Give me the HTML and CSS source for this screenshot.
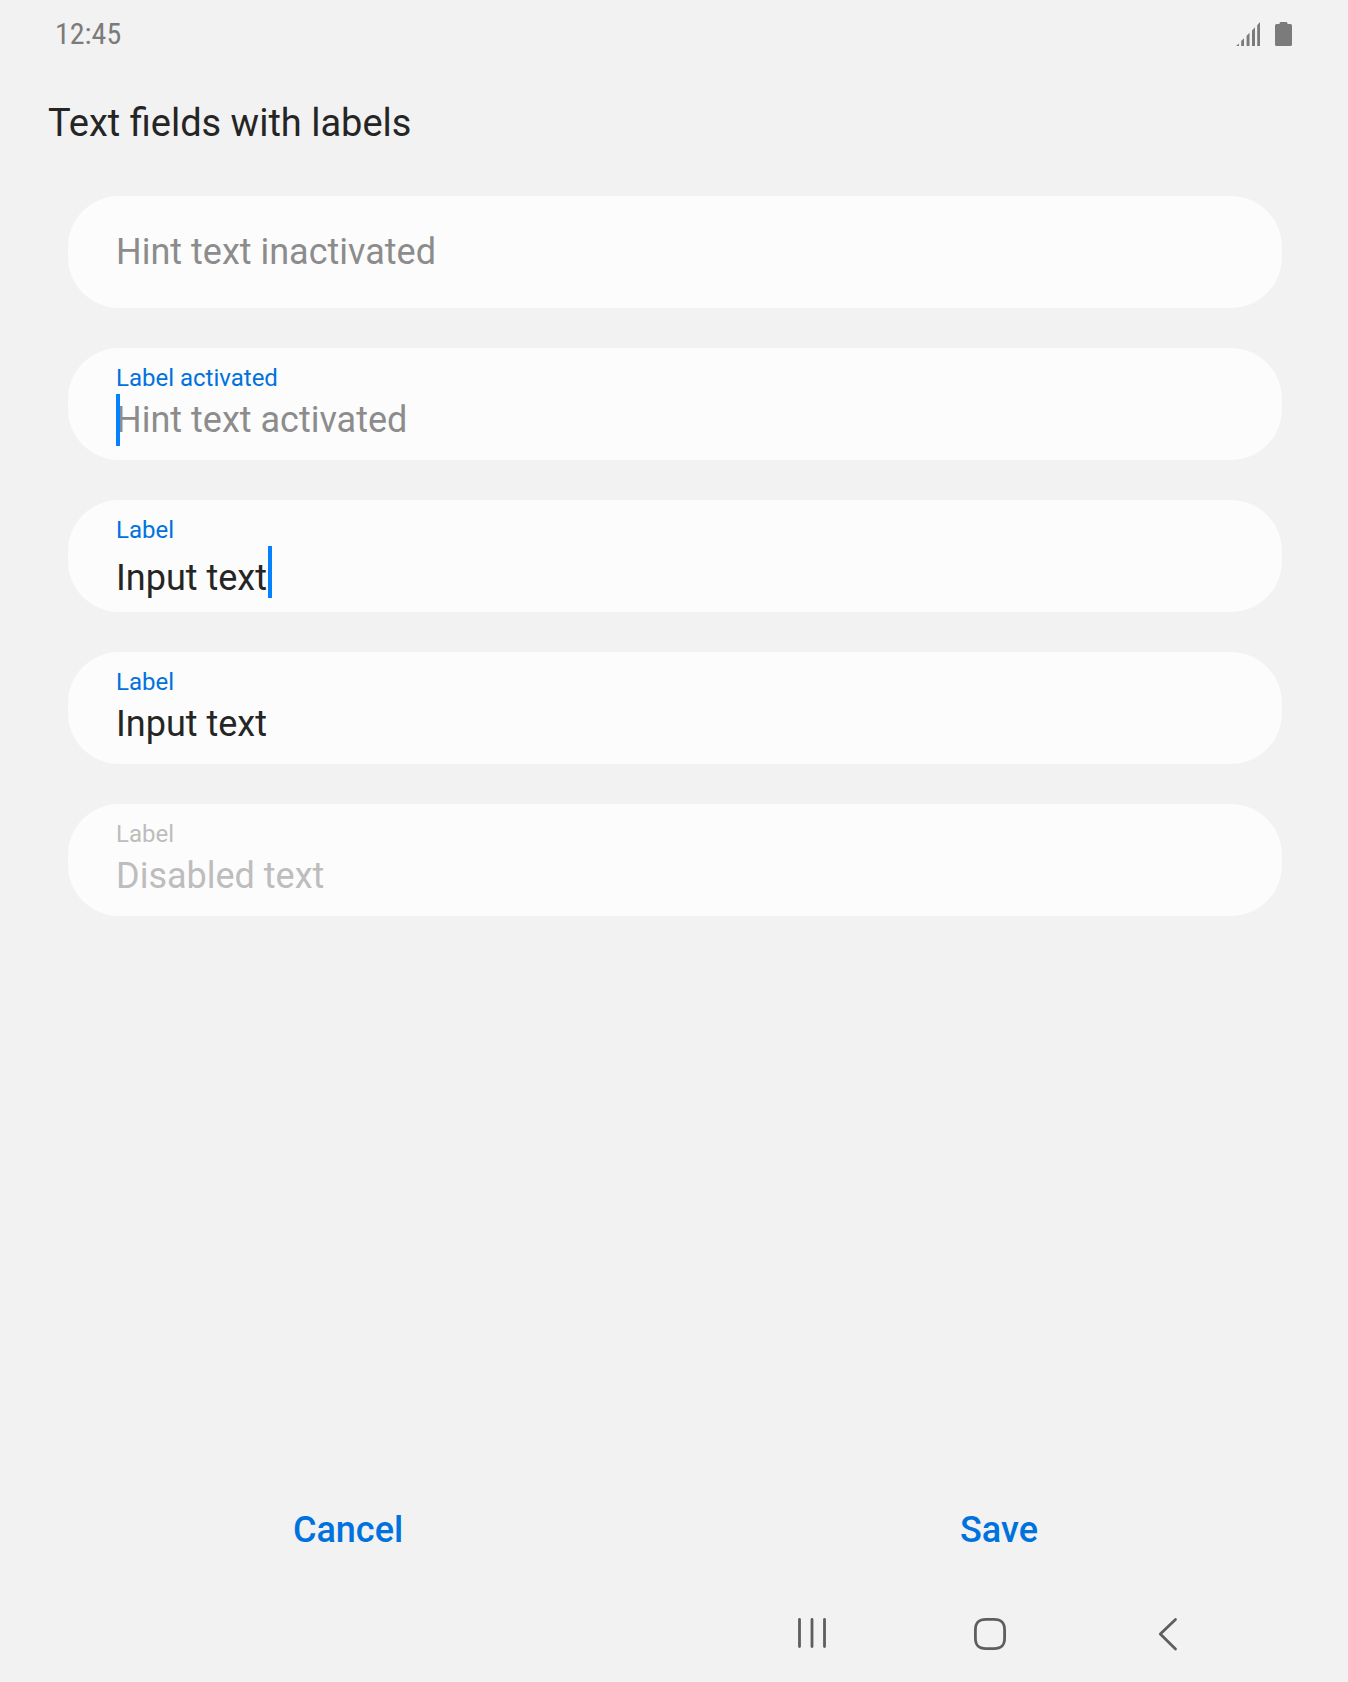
FILE: index.html
```html
<!DOCTYPE html>
<html lang="en">
<head>
<meta charset="utf-8">
<title>Text fields with labels</title>
<link rel="stylesheet" href="styles.css">
</head>
<body>
<div class="screen">
  <header class="status-bar">
    <span class="clock">12:45</span>
    <div class="status-icons">
      <svg class="signal" width="25" height="26" viewBox="0 0 25 26">
        <path d="M0 25L3 22.500V25ZM5.200 25V20L8 17.200V25ZM10.600 25V14.800L13.500 11.700V25ZM16 25V9.400L19 6.200V25ZM21.200 25V4.200L24 1V25Z"/>
      </svg>
      <svg class="battery" width="17" height="26" viewBox="0 0 17 26">
        <path d="M4.500 3V2.400Q4.500 1 5.900 1H11.100Q12.500 1 12.500 2.400V3H15.500Q17 3 17 4.500V23.500Q17 25 15.500 25H1.500Q0 25 0 23.500V4.500Q0 3 1.500 3Z"/>
      </svg>
    </div>
  </header>

  <h1 class="title">Text fields with labels</h1>

  <main class="fields">
    <div class="field field-empty">
      <div class="value hint">Hint text inactivated</div>
    </div>
    <div class="field">
      <div class="label">Label activated</div>
      <div class="value hint"><span class="caret caret-start"></span>Hint text activated</div>
    </div>
    <div class="field">
      <div class="label">Label</div>
      <div class="value value-low">Input text<span class="caret caret-end"></span></div>
    </div>
    <div class="field">
      <div class="label">Label</div>
      <div class="value">Input text</div>
    </div>
    <div class="field field-disabled">
      <div class="label">Label</div>
      <div class="value">Disabled text</div>
    </div>
  </main>

  <div class="actions">
    <button class="action" type="button">Cancel</button>
    <button class="action" type="button">Save</button>
  </div>

  <nav class="nav-bar">
    <svg class="nav-icon" width="36" height="36" viewBox="0 0 36 36">
      <path d="M5.500 3.500V30.500M18 3.500V30.500M30.500 3.500V30.500"/>
    </svg>
    <svg class="nav-icon" width="36" height="36" viewBox="0 0 36 36">
      <path d="M14 3.400H22C29.500 3.400 32.600 6.500 32.600 14V22C32.600 29.500 29.500 32.600 22 32.600H14C6.500 32.600 3.400 29.500 3.400 22V14C3.400 6.500 6.500 3.400 14 3.400Z"/>
    </svg>
    <svg class="nav-icon" width="36" height="36" viewBox="0 0 36 36">
      <path d="M25.500 3.500L10.300 18L25.500 33"/>
    </svg>
  </nav>
</div>
</body>
</html>
```
FILE: styles.css
```css
* {
  box-sizing: border-box;
}

body {
  margin: 0;
  background: #f2f2f2;
  color: #252525;
  font-family: Roboto, sans-serif;
}

.screen {
  display: flex;
  flex-direction: column;
  height: 1682px;
}

.status-bar {
  display: flex;
  justify-content: space-between;
  align-items: center;
  height: 68px;
  padding: 0 56px 0 55px;
}

.clock {
  padding-bottom: 2px;
  color: #7b7b7b;
  font-family: "Roboto Condensed", Roboto, sans-serif;
  font-size: 30px;
  font-stretch: 75%;
}

.status-icons {
  display: flex;
  gap: 14px;
  fill: #7b7b7b;
}

.title {
  margin: 32px 0 0 48px;
  font-size: 38px;
  font-weight: 400;
  line-height: 46px;
}

.fields {
  display: flex;
  flex-direction: column;
  gap: 40px;
  margin: 50px 66px 0 68px;
}

.field {
  height: 112px;
  padding: 16px 48px 0;
  border-radius: 51px;
  background: #fcfcfc;
}

.field-empty {
  padding-top: 30px;
}

.label {
  color: #0072de;
  font-size: 24px;
  line-height: 28px;
}

.value {
  position: relative;
  margin-top: 2px;
  font-size: 36px;
  line-height: 52px;
}

.field-empty .value {
  margin-top: 0;
}

.value-low {
  padding-top: 6px;
}

.hint {
  color: #8c8c8c;
}

.field-disabled .label,
.field-disabled .value {
  color: #bdbdbd;
}

.caret {
  position: absolute;
  top: 0;
  width: 4px;
  height: 52px;
  background: #0381fe;
}

.caret-start {
  left: 0;
}

.caret-end {
  left: 152px;
}

.actions {
  display: grid;
  grid-template-columns: 650px 652px;
  margin: auto 23px 0;
}

.action {
  height: 80px;
  padding: 0;
  border: 0;
  background: none;
  color: #0072de;
  font: 500 36px/80px Roboto, sans-serif;
}

.nav-bar {
  display: grid;
  grid-template-columns: repeat(3, 178px);
  place-items: center;
  height: 96px;
  margin: 16px 0 0 723px;
}

.nav-icon {
  fill: none;
  stroke: #5e5e5e;
  stroke-width: 2.8;
  stroke-linecap: round;
  stroke-linejoin: round;
}
```
